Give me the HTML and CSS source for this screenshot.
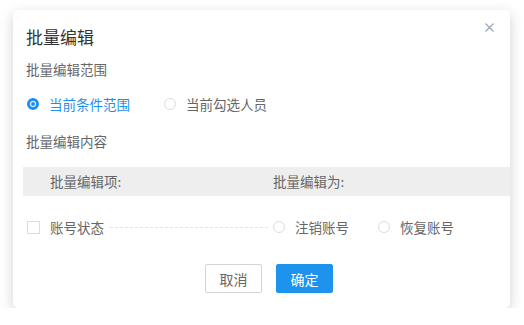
FILE: index.html
```html
<!DOCTYPE html>
<html lang="zh-CN">
<head>
  <meta charset="UTF-8" />
  <title>批量编辑</title>
  <link rel="stylesheet" href="styles.css">
</head>
<body>
  <div class="dialog">
    <span class="close">
      <svg width="9" height="9" viewBox="0 0 9 9"><path d="M0.5 0.5L8.5 8.5M8.5 0.5L0.5 8.5" stroke="#9aa4b4" stroke-width="1.1" fill="none"/></svg>
    </span>
    <h2 class="title">批量编辑</h2>

    <div class="label first">批量编辑范围</div>
    <div class="radios scope">
      <label class="radio on"><i></i>当前条件范围</label>
      <label class="radio"><i></i>当前勾选人员</label>
    </div>

    <div class="label">批量编辑内容</div>
    <div class="table">
      <div class="thead">
        <div class="col1">批量编辑项:</div>
        <div class="col2">批量编辑为:</div>
      </div>
      <div class="trow">
        <div class="col1">
          <span class="check"></span>
          <span>账号状态</span>
          <span class="dash"></span>
        </div>
        <div class="col2 radios">
          <label class="radio"><i></i>注销账号</label>
          <label class="radio"><i></i>恢复账号</label>
        </div>
      </div>
    </div>

    <div class="footer">
      <button class="btn">取消</button>
      <button class="btn primary">确定</button>
    </div>
  </div>
</body>
</html>
```

FILE: styles.css
```css
body { margin: 0; background: #fff; font-family: "Noto Sans CJK SC", "Noto Sans", sans-serif; color: #666; }

.dialog {
  position: relative; box-sizing: border-box;
  margin: 10px 0 0 13px; width: 497px; height: 298px;
  background: #fff; border-radius: 5px;
  box-shadow: 0 4px 14px rgba(0,0,0,0.18);
  padding-top: 16px;
}
.close { position: absolute; top: 13px; right: 16px; width: 9px; height: 9px; line-height: 0; }

.title { margin: 0 0 0 13px; font-size: 17px; line-height: 22px; font-weight: normal; color: #333; }
.label { margin: 17px 0 0 13px; font-size: 13.5px; line-height: 20px; }
.label.first { margin-top: 11px; }

.radios { display: flex; font-size: 13.5px; line-height: 20px; }
.scope { margin: 15px 0 0 14px; }
.scope .radio { margin-right: 34px; }
.radio { display: flex; align-items: center; }
.radio i {
  box-sizing: border-box; width: 12px; height: 12px; margin-right: 10px;
  border: 1px solid #dcdcdc; border-radius: 50%; position: relative;
}
.radio.on { color: #1d8ff0; }
.radio.on i { border: 3px solid #1d8ff0; }
.radio.on i::after {
  content: ""; position: absolute; left: 1px; top: 1px;
  width: 4px; height: 4px; border-radius: 50%; background: #1d8ff0;
}

.table { margin: 16px 0 0 10px; font-size: 13.5px; }
.thead, .trow { display: grid; grid-template-columns: 250px 1fr; }
.thead { background: #eee; height: 29px; line-height: 29px; }
.thead .col1 { padding-left: 27px; }
.trow { margin-top: 21px; line-height: 20px; }
.trow .col1 { display: flex; align-items: center; padding: 0 5px 0 4px; }
.check { box-sizing: border-box; width: 13px; height: 13px; border: 1px solid #dcdcdc; margin-right: 10px; }
.dash { flex: 1; border-top: 1px dashed #e4e4e4; margin-left: 6px; }
.trow .radios .radio { margin-right: 29px; }

.footer { display: flex; margin: 27px 0 0 192px; }
.btn {
  box-sizing: border-box; width: 57px; height: 29px; margin-right: 14px;
  font-family: inherit; font-size: 14px; color: #666;
  background: #fff; border: 1px solid #d4d4d4; border-radius: 2px;
}
.btn.primary { background: #1d93ee; border-color: #1d93ee; color: #fff; }
```
